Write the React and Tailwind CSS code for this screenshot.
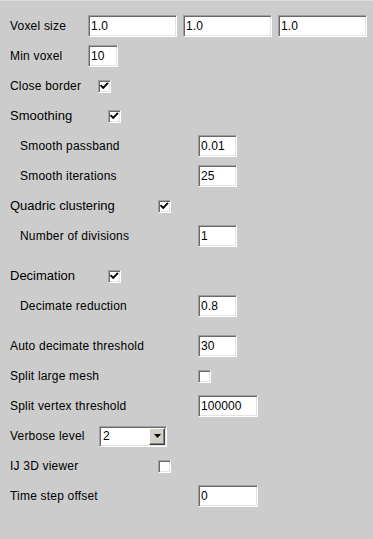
import React from "react";

const sunken =
  "border border-t-[#a0a0a0] border-l-[#a0a0a0] border-b-white border-r-white shadow-[inset_1px_1px_0_#696969,inset_-1px_-1px_0_#e3e3e3]";

function Field({ w, value }) {
  return (
    <div
      className={`${sunken} ${w} h-[22px] bg-white flex items-center pl-[2px] text-[12px] text-black tracking-[0.1px]`}
    >
      {value}
    </div>
  );
}

function Check({ checked }) {
  return (
    <div className={`${sunken} w-[13px] h-[13px] bg-white relative`}>
      {checked && (
        <svg
          className="absolute left-0 top-0"
          width="11"
          height="11"
          viewBox="0 0 11 11"
        >
          <path
            d="M2.2 4.8 L4.2 6.8 L8.3 2.6"
            fill="none"
            stroke="#000"
            strokeWidth="1.9"
            strokeLinecap="square"
          />
        </svg>
      )}
    </div>
  );
}

function Row({ children, className = "" }) {
  return <div className={`flex items-center h-[30px] ${className}`}>{children}</div>;
}

export default function App() {
  return (
    <div
      className="w-[373px] h-[539px] bg-[#cccccc] border-t border-t-[#dddddd] pt-[10px] text-black text-[12px] tracking-[0.2px]"
      style={{ fontFamily: '"Liberation Sans", Arial, sans-serif' }}
    >
      <Row className="pl-[10px]">
        <div className="w-[78px]">Voxel size</div>
        <div className="flex gap-[6px]">
          <Field w="w-[89px]" value="1.0" />
          <Field w="w-[89px]" value="1.0" />
          <Field w="w-[89px]" value="1.0" />
        </div>
      </Row>
      <Row className="pl-[10px]">
        <div className="w-[78px]">Min voxel</div>
        <Field w="w-[30px]" value="10" />
      </Row>
      <Row className="pl-[10px]">
        <div className="w-[88px]">Close border</div>
        <Check checked />
      </Row>
      <Row className="pl-[10px]">
        <div className="w-[98px] text-[13px] tracking-normal">Smoothing</div>
        <Check checked />
      </Row>
      <Row className="pl-[20px]">
        <div className="w-[178px]">Smooth passband</div>
        <Field w="w-[39px]" value="0.01" />
      </Row>
      <Row className="pl-[20px]">
        <div className="w-[178px]">Smooth iterations</div>
        <Field w="w-[39px]" value="25" />
      </Row>
      <Row className="pl-[10px]">
        <div className="w-[148px] text-[13px] tracking-normal">Quadric clustering</div>
        <Check checked />
      </Row>
      <Row className="pl-[20px]">
        <div className="w-[178px]">Number of divisions</div>
        <Field w="w-[39px]" value="1" />
      </Row>
      <Row className="pl-[10px] mt-[10px]">
        <div className="w-[98px] text-[13px] tracking-normal">Decimation</div>
        <Check checked />
      </Row>
      <Row className="pl-[20px]">
        <div className="w-[178px]">Decimate reduction</div>
        <Field w="w-[39px]" value="0.8" />
      </Row>
      <Row className="pl-[10px] mt-[10px]">
        <div className="w-[188px]">Auto decimate threshold</div>
        <Field w="w-[39px]" value="30" />
      </Row>
      <Row className="pl-[10px]">
        <div className="w-[188px]">Split large mesh</div>
        <Check />
      </Row>
      <Row className="pl-[10px]">
        <div className="w-[188px]">Split vertex threshold</div>
        <Field w="w-[60px]" value="100000" />
      </Row>
      <Row className="pl-[10px]">
        <div className="w-[89px]">Verbose level</div>
        <div className={`${sunken} w-[68px] h-[21px] bg-white flex items-stretch`}>
          <div className="flex-1 flex items-center pl-[3px]">2</div>
          <div className="w-[16px] m-[1px] bg-[#d4d0c8] border border-t-white border-l-white border-b-[#404040] border-r-[#404040] shadow-[inset_-1px_-1px_0_#808080] flex items-center justify-center">
            <svg width="7" height="4" viewBox="0 0 7 4">
              <path d="M0 0 H7 L3.5 4 Z" fill="#000" />
            </svg>
          </div>
        </div>
      </Row>
      <Row className="pl-[10px]">
        <div className="w-[148px]">IJ 3D viewer</div>
        <Check />
      </Row>
      <Row className="pl-[10px]">
        <div className="w-[188px]">Time step offset</div>
        <Field w="w-[60px]" value="0" />
      </Row>
    </div>
  );
}
